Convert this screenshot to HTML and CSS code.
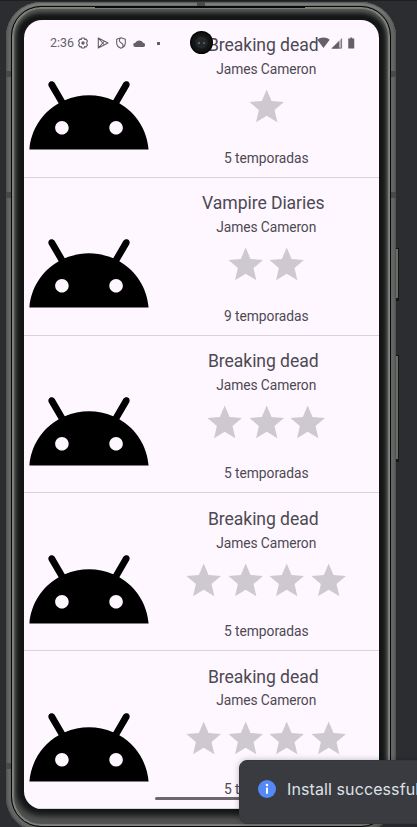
FILE: index.html
```html
<!DOCTYPE html>
<html lang="es">
<head>
<meta charset="utf-8">
<title>Series</title>
<link rel="stylesheet" href="styles.css">
</head>
<body>
<svg class="defs" width="0" height="0">
  <symbol id="star" viewBox="0 0 24 24"><path d="M12 17.27 18.18 21l-1.64-7.03L22 9.24l-7.19-.61L12 2 9.19 8.63 2 9.24l5.46 4.73L5.82 21z"/></symbol>
  <symbol id="android" viewBox="0 0 24 24"><path d="M17.6 9.48l1.84-3.18c.16-.31.04-.69-.26-.85-.29-.15-.65-.06-.83.22l-1.88 3.24c-2.86-1.21-6.08-1.21-8.94 0L5.65 5.67c-.19-.29-.58-.38-.87-.2-.28.18-.37.54-.22.83L6.4 9.48C3.3 11.25 1.28 14.44 1 18h22c-.28-3.56-2.3-6.75-5.4-8.52zM7 15.25c-.69 0-1.25-.56-1.25-1.25s.56-1.25 1.25-1.25 1.25.56 1.25 1.25-.56 1.25-1.25 1.25zm10 0c-.69 0-1.25-.56-1.25-1.25s.56-1.25 1.25-1.25 1.25.56 1.25 1.25-.56 1.25-1.25 1.25z"/></symbol>
</svg>
<main class="desk">
  <span class="key key-power"></span>
  <span class="key key-volume"></span>
  <div class="phone">
    <span class="band band-top"></span>
    <span class="band band-left-a"></span>
    <span class="band band-left-b"></span>
    <span class="band band-left-c"></span>
    <span class="band band-right-a"></span>
    <span class="band band-right-b"></span>
    <div class="rim">
      <span class="slit"></span>
      <div class="screen">
        <ul class="list">
          <li class="row">
            <svg class="cover"><use href="#android"/></svg>
            <div class="info">
              <h2 class="name">Breaking dead</h2>
              <p class="director">James Cameron</p>
              <div class="stars"><svg><use href="#star"/></svg></div>
              <p class="seasons">5 temporadas</p>
            </div>
          </li>
          <li class="row">
            <svg class="cover"><use href="#android"/></svg>
            <div class="info">
              <h2 class="name">Vampire Diaries</h2>
              <p class="director">James Cameron</p>
              <div class="stars"><svg><use href="#star"/></svg><svg><use href="#star"/></svg></div>
              <p class="seasons">9 temporadas</p>
            </div>
          </li>
          <li class="row">
            <svg class="cover"><use href="#android"/></svg>
            <div class="info">
              <h2 class="name">Breaking dead</h2>
              <p class="director">James Cameron</p>
              <div class="stars"><svg><use href="#star"/></svg><svg><use href="#star"/></svg><svg><use href="#star"/></svg></div>
              <p class="seasons">5 temporadas</p>
            </div>
          </li>
          <li class="row">
            <svg class="cover"><use href="#android"/></svg>
            <div class="info">
              <h2 class="name">Breaking dead</h2>
              <p class="director">James Cameron</p>
              <div class="stars"><svg><use href="#star"/></svg><svg><use href="#star"/></svg><svg><use href="#star"/></svg><svg><use href="#star"/></svg></div>
              <p class="seasons">5 temporadas</p>
            </div>
          </li>
          <li class="row">
            <svg class="cover"><use href="#android"/></svg>
            <div class="info">
              <h2 class="name">Breaking dead</h2>
              <p class="director">James Cameron</p>
              <div class="stars"><svg><use href="#star"/></svg><svg><use href="#star"/></svg><svg><use href="#star"/></svg><svg><use href="#star"/></svg></div>
              <p class="seasons">5 temporadas</p>
            </div>
          </li>
        </ul>
        <div class="status">
          <span class="clock">2:36</span>
          <svg class="ic-gear" viewBox="0 0 12 12"><path d="M4.800 1h2.400l.4 1.400 1.500-.3 1.400 2-1 1.900 1 1.900-1.400 2-1.500-.3L7.200 11H4.800l-.4-1.400-1.500.3-1.400-2 1-1.900-1-1.900 1.400-2 1.500.3z" fill="none" stroke="currentColor" stroke-width="1.100" stroke-linejoin="round"/><circle cx="6" cy="6" r="1.700"/></svg>
          <svg class="ic-play" viewBox="0 0 12 12"><path d="M1.300 1v10L11 6zM1.300 1 7.500 8M1.300 11 7.500 4" fill="none" stroke="currentColor" stroke-width="1.100" stroke-linejoin="round"/></svg>
          <svg class="ic-shield" viewBox="0 0 12 12"><path d="M6 .8 10.300 2.300v3.500c0 2.500-1.700 4.500-4.300 5.400C3.400 10.300 1.700 8.300 1.700 5.800V2.300zM5.500 1C3.800 3 4 4.700 6 5.700s2.700 2.200 1.600 4.500" fill="none" stroke="currentColor" stroke-width="1.100" stroke-linejoin="round"/></svg>
          <svg class="ic-cloud" viewBox="0 0 12 12"><path d="M2.200 9.200a2 2 0 0 1 0-4A3.900 3.400 0 0 1 9.300 5.300a2 2 0 0 1 .5 3.900z"/></svg>
          <span class="dot"></span>
          <span class="grow"></span>
          <svg class="ic-wifi" viewBox="0 0 13 12"><path d="M.3 2.700C4-.1 9-.1 12.700 2.700L6.500 11z"/></svg>
          <svg class="ic-signal" viewBox="0 0 12 12"><path d="M.5 11.500 11 1v10.500z" opacity=".45"/><path d="M.5 11.500 8 4v7.500z"/><path d="M.8 11.100h9.800V1.600" fill="none" stroke="currentColor" stroke-width=".7"/></svg>
          <svg class="ic-battery" viewBox="0 0 6 12"><path d="M2 .5h2v1h2v10H0v-10h2z"/></svg>
        </div>
        <span class="camera"></span>
        <span class="home-bar"></span>
      </div>
    </div>
  </div>
  <div class="toast">
    <svg class="ic-info" viewBox="0 0 18 18"><circle cx="9" cy="9" r="9"/><circle class="mark" cx="9" cy="5" r="1.300"/><rect class="mark" x="8" y="7.500" width="2" height="6.200" rx=".5"/></svg>
    <span>Install successful</span>
  </div>
</main>
</body>
</html>
```
FILE: styles.css
```css
* { box-sizing: border-box; margin: 0; padding: 0; }
body { width: 417px; height: 827px; overflow: hidden; background: #2b2d30; font-family: Roboto, sans-serif; }
svg { display: block; fill: currentColor; flex: none; }
.defs { position: absolute; }
.desk { position: relative; width: 417px; height: 827px; overflow: hidden; padding: 1px 21px 0 6px; border-top: 1px solid #1e1f22; }
.key { position: absolute; left: 395px; width: 4px; background: #6a6c6a; border: solid #151515; border-width: 1px 1px 3px 0; }
.key-power { top: 247px; height: 53px; }
.key-volume { top: 354px; height: 107px; }
.phone {
  position: relative; height: 830px; padding: 4px 5px 4px; border-radius: 35px;
  background: #646664;
  box-shadow: inset 0 0 2px 1px #484a48, inset 0 3px 2px #8b8e86;
}
.band { position: absolute; width: 5px; height: 6px; background: #484a48; }
.band-top { left: 191px; top: 0; width: 8px; height: 4px; }
.band-left-a { left: 0; top: 69px; }
.band-left-b { left: 0; top: 190px; }
.band-left-c { left: 0; top: 761px; }
.band-right-a { right: 0; top: 69px; }
.band-right-b { right: 0; top: 190px; }
.rim {
  position: relative; height: 821px; padding: 13px 12px; border: 1px solid #080808; border-radius: 30px; background: #141515;
  box-shadow: inset 0 0 1px 2px #80827f, inset 0 0 2px 3px #4c4e4c, inset 0 4px 4px 2px #555755, inset 0 -7px 6px 3px #555755;
}
.slit { position: absolute; left: 83px; top: -1px; width: 210px; height: 2px; background: #080808; }
.screen { position: relative; width: 355px; height: 789px; border-radius: 18px; overflow: hidden; background: #fef7ff; color: #4d4953; }
.list { list-style: none; }
.row { display: flex; height: 157.800px; border-bottom: 1px solid #d9d3db; }
.cover { width: 130px; height: 130px; margin-top: 32.400px; margin-left: -.5px; color: #000; }
.info { flex: 1; display: flex; flex-direction: column; align-items: center; padding-top: 13.400px; white-space: nowrap; }
.name { height: 25.900px; margin-right: 6px; font-size: 17.600px; line-height: 24px; font-weight: 400; letter-spacing: -.08px; }
.director { height: 27.200px; font-size: 13.800px; line-height: 21px; letter-spacing: -.09px; }
.stars { display: flex; height: 41.400px; color: #cec9d0; }
.stars svg { width: 41.400px; height: 41.400px; }
.seasons { margin-top: 20px; font-size: 13.800px; line-height: 21px; letter-spacing: -.04px; }
.status { position: absolute; inset: 15px 24.500px auto 26px; height: 16px; display: flex; align-items: center; color: #646166; }
.clock { width: 27px; font-size: 12.500px; line-height: 16px; }
.status svg { height: 12px; width: 12px; }
.ic-play { margin-left: 8px; }
.ic-shield { margin-left: 6px; }
.status .ic-cloud { margin-left: 6px; width: 13px; height: 13px; }
.dot { width: 3px; height: 3px; margin-left: 11px; background: #646166; }
.grow { flex: 1; }
.status .ic-wifi { width: 13px; }
.ic-signal { margin-left: 1px; }
.status .ic-battery { width: 6.500px; margin-left: 5px; }
.camera { position: absolute; left: 166px; top: 11px; width: 23px; height: 23px; border-radius: 50%; background: radial-gradient(circle at 9px 12px, #467 0 .7px, transparent 1.500px), radial-gradient(circle at 14px 12px, #458 0 .7px, transparent 1.500px), radial-gradient(circle, #252728 0 5px, #131414 7px 9px, #000 11px); }
.home-bar { position: absolute; left: 131px; top: 777px; width: 120px; height: 3px; border-radius: 2px; background: #6b676c; }
.toast {
  position: absolute; left: 239px; top: 759px; width: 340px; height: 64px; padding: 0 0 6px 18px; display: flex; align-items: center; gap: 11px;
  border: 1px solid #35373b; border-radius: 8px; background: #393b40; color: #dfe1e5; white-space: nowrap;
  font: 16px Inter, sans-serif; letter-spacing: .1px; box-shadow: 0 0 6px rgba(0,0,0,.25);
}
.ic-info { width: 18px; height: 18px; color: #548af7; }
.mark { fill: #fff; }
```
